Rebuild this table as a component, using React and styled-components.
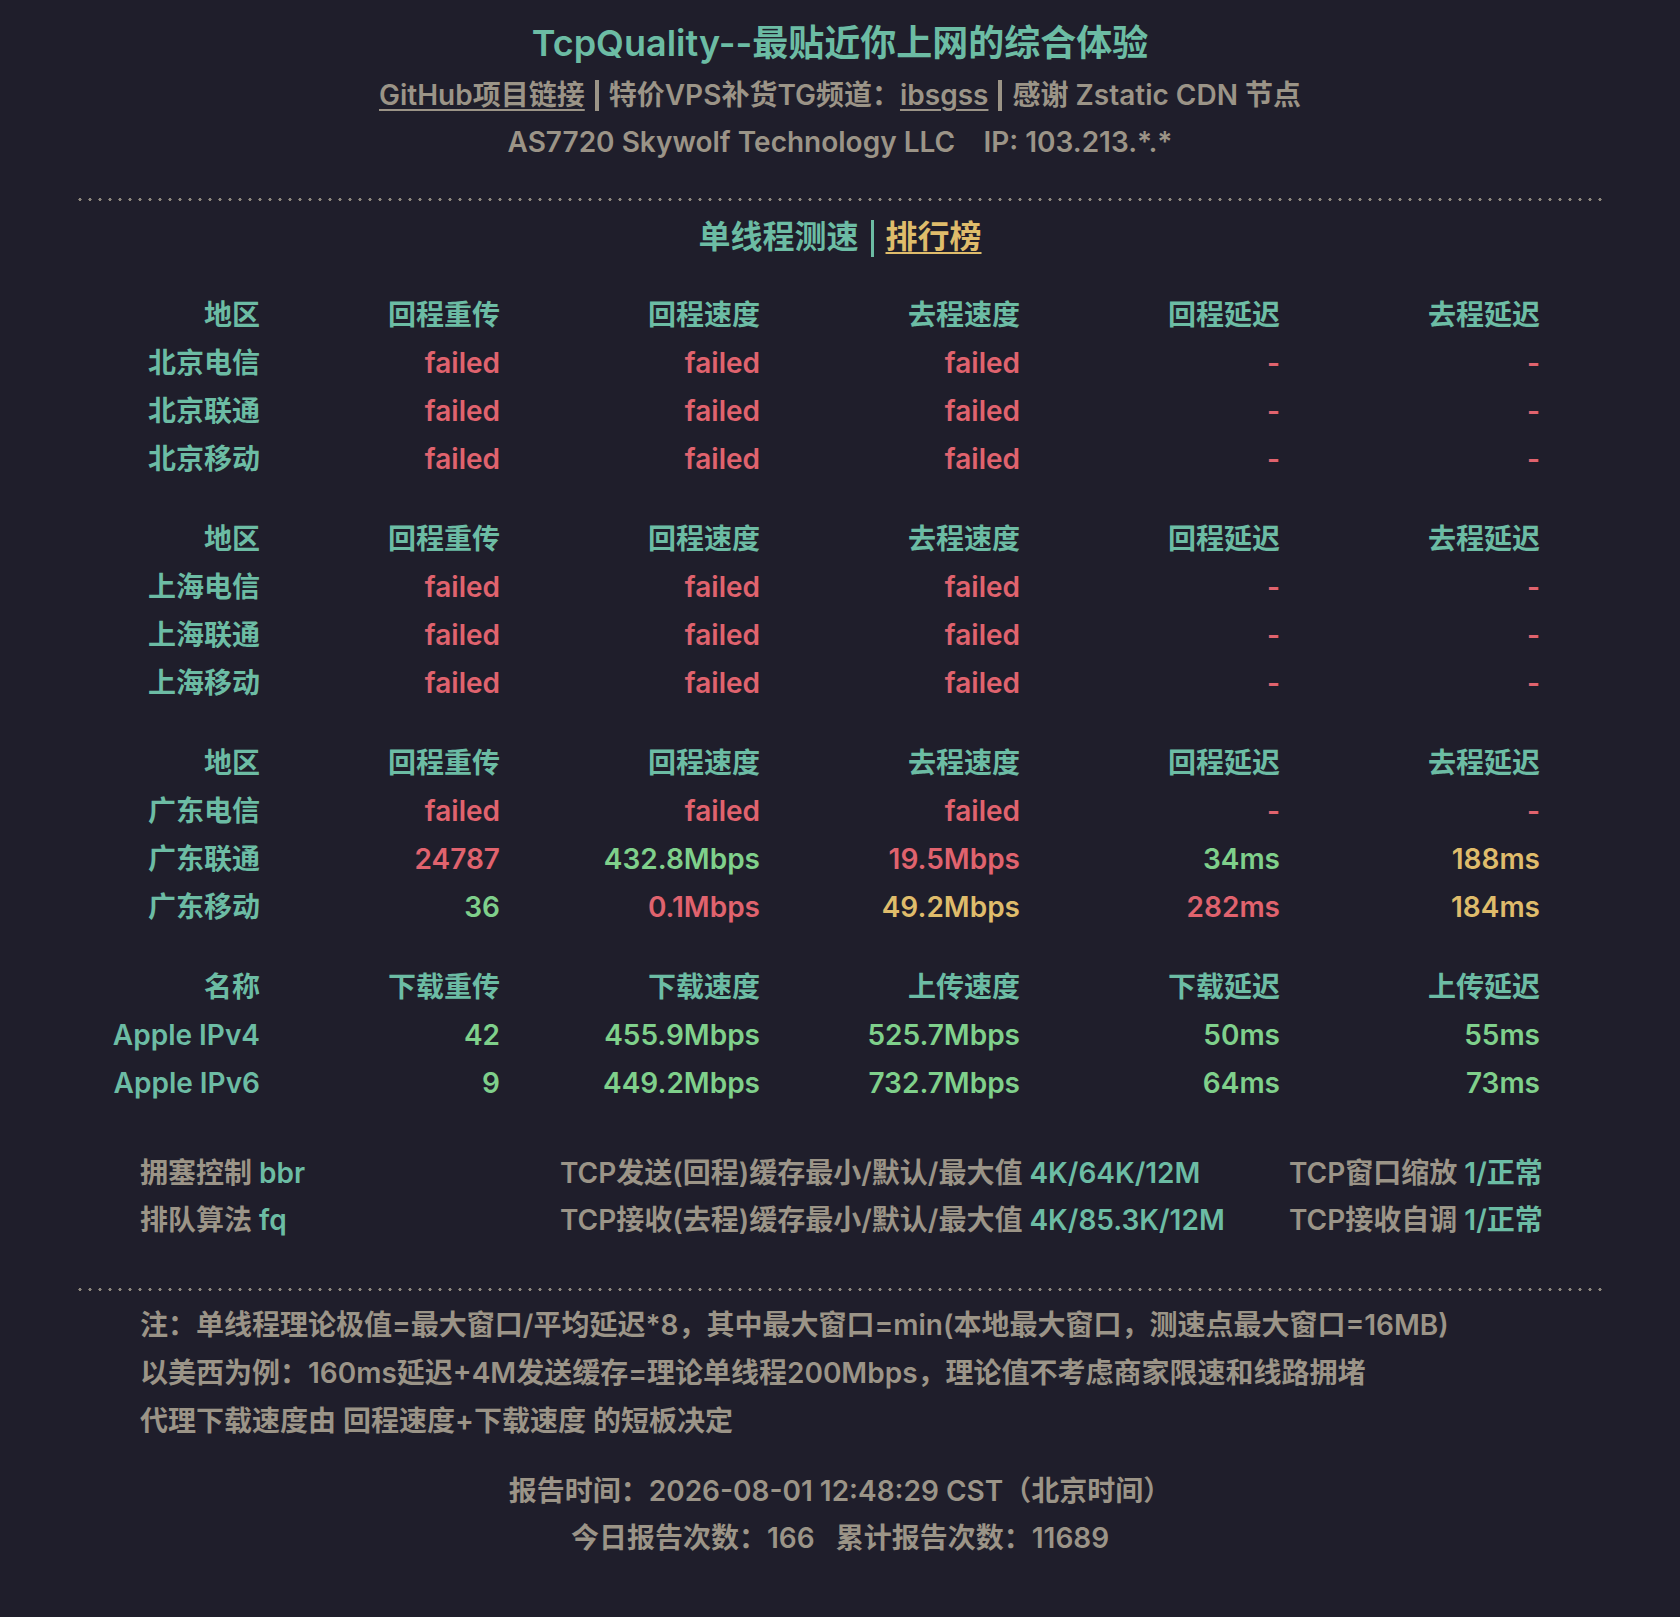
import React from "react";
import styled, { createGlobalStyle } from "styled-components";

const C = {
  bg: "#1f1e2b",
  teal: "#6cbca4",
  gray: "#9b9487",
  dot: "#8c867c",
  red: "#e0636e",
  green: "#7fd08b",
  yellow: "#dfbc6b",
};

const Global = createGlobalStyle`
  html, body { margin: 0; padding: 0; background: ${C.bg}; }
  body {
    font-family: "Inter", "Noto Sans CJK SC", "Noto Sans", sans-serif;
    font-weight: 600;
    color: ${C.gray};
    -webkit-font-smoothing: antialiased;
  }
`;

const Page = styled.div`
  width: 1680px;
  min-height: 1617px;
  padding-top: 17px;
  box-sizing: border-box;
  background: ${C.bg};
`;

const Title = styled.h1`
  margin: 0;
  text-align: center;
  font-size: 36px;
  line-height: 52px;
  font-weight: 600;
  color: ${C.teal};
`;

const Line = styled.div`
  text-align: center;
  font-size: 28px;
  line-height: ${(p) => p.$lh || 48}px;
  margin-top: ${(p) => p.$mt || 0}px;
  color: ${C.gray};
  white-space: pre;
`;

const Link = styled.a`
  color: ${(p) => p.$color || C.gray};
  text-decoration: underline;
  text-decoration-thickness: 2px;
  text-underline-offset: 4px;
`;

const Bar = styled.span`
  display: inline-block;
  width: ${(p) => p.$w || 3}px;
  height: ${(p) => p.$h}px;
  background: ${(p) => p.$color};
  vertical-align: middle;
  margin: 0 ${(p) => p.$gap}px;
  position: relative;
  top: ${(p) => p.$top || 0}px;
`;

const Divider = styled.div`
  margin: ${(p) => p.$mt}px 0 0 78px;
  width: 1527px;
  height: 3px;
  background-image: radial-gradient(circle at 2px 1.5px, ${C.dot} 1.4px, transparent 1.8px);
  background-size: 10px 3px;
  background-repeat: repeat-x;
`;

const SectionTitle = styled.div`
  margin-top: 12px;
  text-align: center;
  font-size: 32px;
  line-height: 48px;
  color: ${C.teal};
`;

const Table = styled.div`
  margin: 30px 0 0 100px;
  display: flex;
  flex-direction: column;
  gap: 32px;
`;

const Group = styled.div`
  display: grid;
  grid-template-columns: 160px 240px 260px 260px 260px 260px;
  grid-auto-rows: 48px;
  font-size: 28px;
  line-height: 48px;
`;

const Cell = styled.div`
  text-align: right;
  white-space: nowrap;
  color: ${(p) => p.$color};
`;

const Config = styled.div`
  margin: 43px 0 0 140px;
  display: grid;
  grid-template-columns: 420px 729px auto;
  grid-auto-rows: 47px;
  font-size: 28px;
  line-height: 47px;
  width: 1400px;
`;

const ConfigItem = styled.div`
  white-space: nowrap;
  color: ${C.gray};
`;

const Val = styled.span`
  color: ${C.teal};
`;

const Notes = styled.div`
  margin: 10px 0 0 140px;
  font-size: 28px;
  line-height: 48px;
  color: ${C.gray};
`;

const Footer = styled.div`
  margin-top: 23px;
  text-align: center;
  font-size: 28px;
  line-height: 47px;
  color: ${C.gray};
  white-space: pre;
`;

const cols1 = ["地区", "回程重传", "回程速度", "去程速度", "回程延迟", "去程延迟"];
const cols2 = ["名称", "下载重传", "下载速度", "上传速度", "下载延迟", "上传延迟"];
const F = ["failed", "r"];
const D = ["-", "r"];
const colorOf = { r: C.red, g: C.green, y: C.yellow };

const groups = [
  {
    head: cols1,
    rows: [
      ["北京电信", F, F, F, D, D],
      ["北京联通", F, F, F, D, D],
      ["北京移动", F, F, F, D, D],
    ],
  },
  {
    head: cols1,
    rows: [
      ["上海电信", F, F, F, D, D],
      ["上海联通", F, F, F, D, D],
      ["上海移动", F, F, F, D, D],
    ],
  },
  {
    head: cols1,
    rows: [
      ["广东电信", F, F, F, D, D],
      ["广东联通", ["24787", "r"], ["432.8Mbps", "g"], ["19.5Mbps", "r"], ["34ms", "g"], ["188ms", "y"]],
      ["广东移动", ["36", "g"], ["0.1Mbps", "r"], ["49.2Mbps", "y"], ["282ms", "r"], ["184ms", "y"]],
    ],
  },
  {
    head: cols2,
    rows: [
      ["Apple IPv4", ["42", "g"], ["455.9Mbps", "g"], ["525.7Mbps", "g"], ["50ms", "g"], ["55ms", "g"]],
      ["Apple IPv6", ["9", "g"], ["449.2Mbps", "g"], ["732.7Mbps", "g"], ["64ms", "g"], ["73ms", "g"]],
    ],
  },
];

export default function App() {
  return (
    <Page>
      <Global />
      <Title>TcpQuality--最贴近你上网的综合体验</Title>
      <Line $mt={2}>
        <Link href="#">GitHub项目链接</Link>
        <Bar $h={31} $w={4} $gap={10} $color={C.gray} $top={-2} />
        特价VPS补货TG频道：<Link href="#">ibsgss</Link>
        <Bar $h={31} $w={4} $gap={10} $color={C.gray} $top={-2} />
        感谢 Zstatic CDN 节点
      </Line>
      <Line $lh={46}>{"AS7720 Skywolf Technology LLC    IP: 103.213.*.*"}</Line>
      <Divider $mt={33} />
      <SectionTitle>
        单线程测速
        <Bar $h={37} $gap={12} $color={C.teal} $top={-1} />
        <Link href="#" $color={C.yellow}>排行榜</Link>
      </SectionTitle>
      <Table>
        {groups.map((g, gi) => (
          <Group key={gi}>
            {g.head.map((h) => (
              <Cell key={h} $color={C.teal}>{h}</Cell>
            ))}
            {g.rows.map((r, ri) =>
              r.map((c, ci) =>
                ci === 0 ? (
                  <Cell key={ri + "-" + ci} $color={C.teal}>{c}</Cell>
                ) : (
                  <Cell key={ri + "-" + ci} $color={colorOf[c[1]]}>{c[0]}</Cell>
                )
              )
            )}
          </Group>
        ))}
      </Table>
      <Config>
        <ConfigItem>拥塞控制 <Val>bbr</Val></ConfigItem>
        <ConfigItem>TCP发送(回程)缓存最小/默认/最大值 <Val>4K/64K/12M</Val></ConfigItem>
        <ConfigItem>TCP窗口缩放 <Val>1/正常</Val></ConfigItem>
        <ConfigItem>排队算法 <Val>fq</Val></ConfigItem>
        <ConfigItem>TCP接收(去程)缓存最小/默认/最大值 <Val>4K/85.3K/12M</Val></ConfigItem>
        <ConfigItem>TCP接收自调 <Val>1/正常</Val></ConfigItem>
      </Config>
      <Divider $mt={44} />
      <Notes>
        <div>注：单线程理论极值=最大窗口/平均延迟*8，其中最大窗口=min(本地最大窗口，测速点最大窗口=16MB)</div>
        <div>以美西为例：160ms延迟+4M发送缓存=理论单线程200Mbps，理论值不考虑商家限速和线路拥堵</div>
        <div>代理下载速度由 回程速度+下载速度 的短板决定</div>
      </Notes>
      <Footer>
        <div>报告时间：2026-08-01 12:48:29 CST（北京时间）</div>
        <div>{"今日报告次数：166   累计报告次数：11689"}</div>
      </Footer>
    </Page>
  );
}
